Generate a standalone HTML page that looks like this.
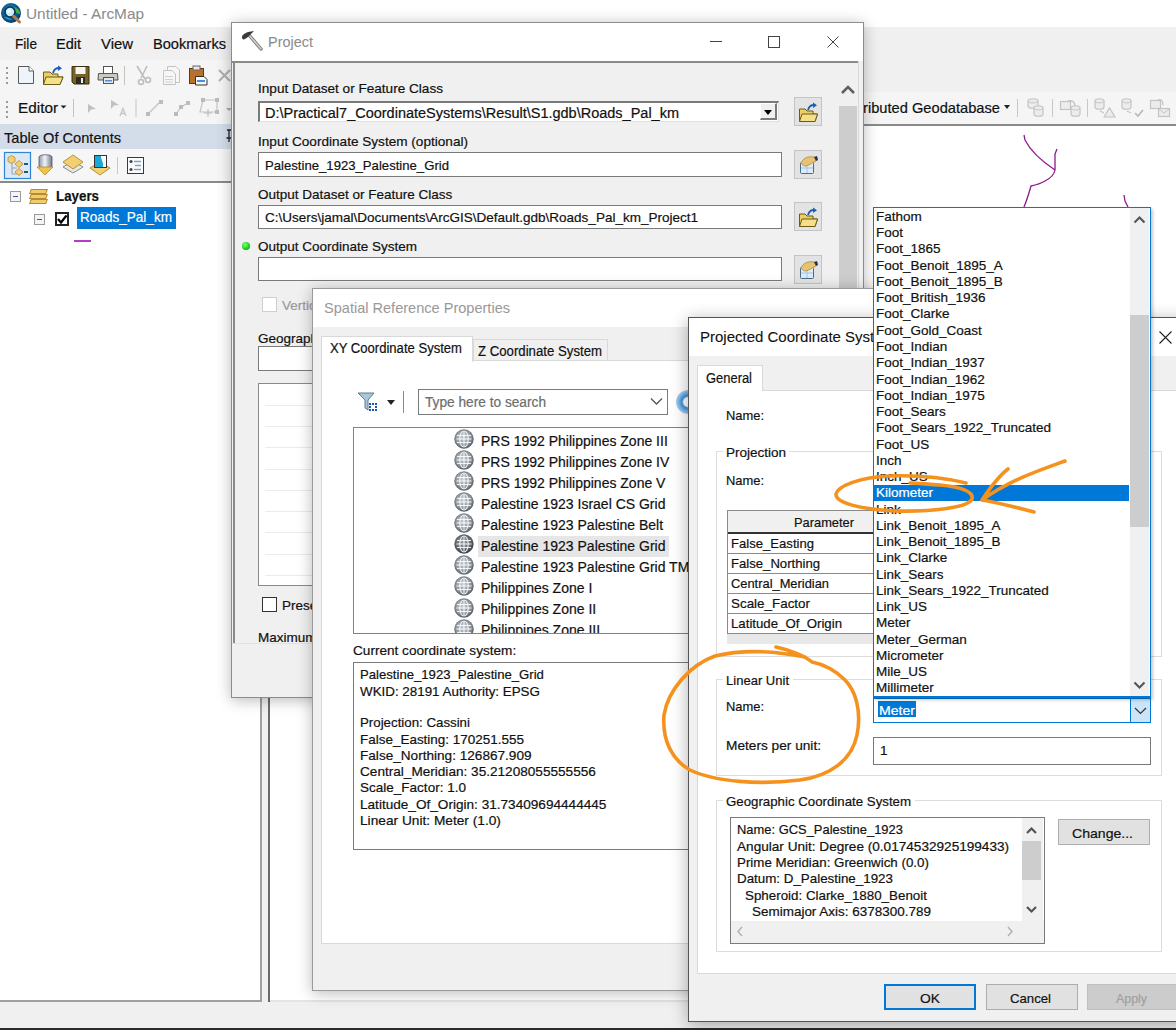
<!DOCTYPE html>
<html><head><meta charset="utf-8">
<style>
*{box-sizing:border-box;margin:0;padding:0}
html,body{width:1176px;height:1030px;overflow:hidden;background:#f0f0f0;font-family:"Liberation Sans",sans-serif;color:#000;position:relative}
.a{position:absolute}
.t{position:absolute;white-space:pre;line-height:1;transform-origin:0 0;-webkit-text-stroke:0.2px currentColor}
svg{position:absolute;overflow:visible}
</style></head><body>
<div class="a" style="left:0px;top:0px;width:1176px;height:27px;background:#fff;"></div>
<svg style="left:0;top:2px" width="24" height="24"><defs><radialGradient id="ag" cx="45%" cy="40%" r="60%"><stop offset="0" stop-color="#2a9ad0"/><stop offset=".6" stop-color="#0d5e96"/><stop offset="1" stop-color="#083a66"/></radialGradient></defs><circle cx="11" cy="11" r="10" fill="url(#ag)"/><path d="M14,5 C17,6 20,8 20,12 C18,12 16,11 15,9 Z" fill="#3fae4a"/><path d="M4,15 C6,17 9,18 12,18 C10,16 7,15 4,15 Z" fill="#2aa0d8"/><circle cx="10" cy="10" r="5" fill="#c8eef8" stroke="#0a3050" stroke-width="1.6"/><circle cx="9" cy="9" r="2" fill="#eafaff"/><path d="M13.5,14 L19.5,20" stroke="#b57a48" stroke-width="3" stroke-linecap="round"/></svg>
<div class="t" style="left:26px;top:6.25px;font-size:15px;color:#8c8c8c;-webkit-text-stroke:0.05px currentColor;transform:scaleX(1.0257);">Untitled - ArcMap</div>
<div class="a" style="left:0px;top:27px;width:1176px;height:33px;background:#f0f0f0;"></div>
<div class="t" style="left:15px;top:36.25px;font-size:15px;color:#111;transform:scaleX(0.9102);">File</div>
<div class="t" style="left:56px;top:36.25px;font-size:15px;color:#111;transform:scaleX(0.9672);">Edit</div>
<div class="t" style="left:101px;top:36.25px;font-size:15px;color:#111;transform:scaleX(0.9925);">View</div>
<div class="t" style="left:153px;top:36.25px;font-size:15px;color:#111;transform:scaleX(0.9730);">Bookmarks</div>
<div class="a" style="left:0px;top:60px;width:240px;height:32px;background:#f5f5f5;"></div>
<div class="a" style="left:0px;top:92px;width:1176px;height:32px;background:#f5f5f5;"></div>
<div class="a" style="left:0px;top:124px;width:1176px;height:2px;background:#8a8a8a;"></div>
<div class="a" style="left:6px;top:67px;width:2px;height:2px;background:#9a9a9a;"></div>
<div class="a" style="left:6px;top:72px;width:2px;height:2px;background:#9a9a9a;"></div>
<div class="a" style="left:6px;top:77px;width:2px;height:2px;background:#9a9a9a;"></div>
<div class="a" style="left:6px;top:82px;width:2px;height:2px;background:#9a9a9a;"></div>
<div class="a" style="left:6px;top:101px;width:2px;height:2px;background:#9a9a9a;"></div>
<div class="a" style="left:6px;top:106px;width:2px;height:2px;background:#9a9a9a;"></div>
<div class="a" style="left:6px;top:111px;width:2px;height:2px;background:#9a9a9a;"></div>
<div class="a" style="left:6px;top:116px;width:2px;height:2px;background:#9a9a9a;"></div>
<svg style="left:0;top:0" width="240" height="125"><path d="M18.5,66.5 L29,66.5 L33.5,71 L33.5,83.5 L18.5,83.5 Z" fill="#eef4fa" stroke="#5a5a5a" stroke-width="1"/><path d="M29,66.5 L29,71 L33.5,71" fill="#fff" stroke="#5a5a5a" stroke-width="1"/><path d="M43.5,72 L50,72 L52,74 L58,74 L58,77 L63,77 L60,84.5 L43.5,84.5 Z" fill="#e9cf66" stroke="#6e5a14" stroke-width="1"/><path d="M46,77 L63,77 L60,84.5 L43.5,84.5 Z" fill="#f4e08a" stroke="#6e5a14" stroke-width="1"/><path d="M53,73 C54,69 57,68 59,68" fill="none" stroke="#1b5fb8" stroke-width="1.8"/><path d="M58,65.5 L62,68.2 L58,71 Z" fill="#1b5fb8"/><path d="M72,66.5 L89,66.5 L89,84 L74,84 L72,82 Z" fill="#75632a" stroke="#3a300e" stroke-width="1"/><rect x="75.5" y="67" width="10" height="7" fill="#f4f4f0"/><rect x="76" y="77" width="9" height="7" fill="#2e2a22"/><rect x="81" y="78" width="2" height="5" fill="#f0f0f0"/><rect x="103.5" y="66.5" width="9" height="7" fill="#fff" stroke="#555" stroke-width="1"/><path d="M98.5,73.5 L117.5,73.5 L118,80 L98,80 Z" fill="#c9c9bf" stroke="#555" stroke-width="1"/><rect x="103.5" y="77.5" width="10" height="6" fill="#dfeaf4" stroke="#555" stroke-width="1"/><rect x="105" y="80" width="7" height="1.5" fill="#5a8fc8"/><rect x="124" y="66" width="1" height="19" fill="#c4c4c4"/><g fill="none" stroke="#bdbdbd" stroke-width="1.6"><path d="M137,66 L145,79 M147,66 L141,78"/><circle cx="141" cy="82" r="2.5"/><circle cx="148" cy="80" r="2.5"/></g><g fill="#f6f6f6" stroke="#c4c4c4" stroke-width="1"><path d="M167.5,66.5 L176,66.5 L179.5,70 L179.5,82.5 L167.5,82.5 Z"/><path d="M163.5,70.5 L172,70.5 L175.5,74 L175.5,84.5 L163.5,84.5 Z"/></g><g stroke="#d0d0d0" stroke-width="1"><path d="M165,76.5 H173 M165,79.5 H173 M165,82 H173"/></g><rect x="189.5" y="68.5" width="14" height="15" fill="#b8702a" stroke="#5a3a10" stroke-width="1"/><rect x="193" y="66" width="7" height="4" fill="#e8e8e8" stroke="#666" stroke-width="1"/><path d="M195.5,76.5 L204,76.5 L207,79.5 L207,85 L195.5,85 Z" fill="#f4f8fc" stroke="#333" stroke-width="1"/><rect x="197" y="80" width="8" height="2" fill="#4a90d9"/><path d="M219,70 L230,81 M230,70 L219,81" stroke="#b0b0b0" stroke-width="2.2"/><path d="M60.5,105.5 L66.5,105.5 L63.5,108.5 Z" fill="#222"/><rect x="73" y="99" width="1" height="18" fill="#c4c4c4"/><path d="M88,104 L96,109 L91,109.5 L88,113 Z" fill="#c0c0c0"/><path d="M111,100 L119,105 L114,105.5 L111,109 Z" fill="#c0c0c0"/><path d="M120,116 L123,108.5 L126,116 M121,113.5 H125" fill="none" stroke="#c8c8c8" stroke-width="1.4"/><rect x="135.5" y="99" width="1" height="18" fill="#c4c4c4"/><path d="M148,114 L160.5,101.5" stroke="#c4c4c4" stroke-width="1.2"/><rect x="146" y="112" width="4" height="4" fill="#bcbcbc"/><rect x="159" y="100" width="4" height="4" fill="#bcbcbc"/><path d="M176,114 L181,107 L188,103" fill="none" stroke="#c4c4c4" stroke-width="1.2"/><rect x="174" y="112" width="4" height="4" fill="#bcbcbc"/><rect x="179" y="105" width="4" height="4" fill="#bcbcbc"/><rect x="186" y="101" width="4" height="4" fill="#bcbcbc"/><path d="M203,100 L217,100 L217,112 L200,112 Z" fill="none" stroke="#c4c4c4" stroke-width="1.2"/><rect x="201" y="98" width="4" height="4" fill="#bcbcbc"/><rect x="215" y="98" width="4" height="4" fill="#bcbcbc"/><rect x="215" y="110" width="4" height="4" fill="#bcbcbc"/><path d="M208,109 V117 M204,113 H212" stroke="#b8b8b8" stroke-width="1"/><path d="M226,108 L232,108 L229,111 Z" fill="#aaa"/></svg>
<div class="t" style="left:18px;top:100.25px;font-size:15px;color:#111;transform:scaleX(1.0208);">Editor</div>
<div class="t" style="left:863px;top:100.25px;font-size:15px;color:#111;transform:scaleX(0.9778);">ributed Geodatabase</div>
<div class="a" style="left:1004px;top:105px;width:0;height:0;border-left:3px solid transparent;border-right:3px solid transparent;border-top:4px solid #222"></div>
<div class="a" style="left:1017px;top:99px;width:1px;height:18px;background:#c8c8c8;"></div>
<div class="a" style="left:1052px;top:99px;width:1px;height:18px;background:#c8c8c8;"></div>
<div class="a" style="left:1087px;top:99px;width:1px;height:18px;background:#c8c8c8;"></div>
<svg style="left:0;top:0" width="1176" height="125"><path d="M1028,101 C1028,98 1038,98 1038,101 L1038,106 C1038,109 1028,109 1028,106 Z" fill="#ececec" stroke="#c4c4c4" stroke-width="1.2"/><path d="M1028,101 C1028,103.5 1038,103.5 1038,101" fill="none" stroke="#c4c4c4" stroke-width="1"/><path d="M1034,108 C1034,105 1043,105 1043,108 L1043,114 C1043,117 1034,117 1034,114 Z" fill="#ececec" stroke="#c4c4c4" stroke-width="1.2"/><path d="M1034,108 C1034,110.5 1043,110.5 1043,108" fill="none" stroke="#c4c4c4" stroke-width="1"/><rect x="1060.5" y="101.5" width="10" height="8" fill="#ececec" stroke="#c4c4c4" stroke-width="1.2"/><path d="M1068,101 C1072,100 1075,102 1075,106" fill="none" stroke="#c4c4c4" stroke-width="1.4"/><path d="M1071,108 C1071,105 1080,105 1080,108 L1080,114 C1080,117 1071,117 1071,114 Z" fill="#ececec" stroke="#c4c4c4" stroke-width="1.2"/><path d="M1071,108 C1071,110.5 1080,110.5 1080,108" fill="none" stroke="#c4c4c4" stroke-width="1"/><path d="M1095,101 C1095,98 1104,98 1104,101 L1104,107 C1104,110 1095,110 1095,107 Z" fill="#ececec" stroke="#c4c4c4" stroke-width="1.2"/><path d="M1095,101 C1095,103.5 1104,103.5 1104,101" fill="none" stroke="#c4c4c4" stroke-width="1"/><path d="M1104,117 L1109.5,108 L1115,117 Z" fill="#ececec" stroke="#c4c4c4" stroke-width="1.2"/><path d="M1100,111 L1104,113" stroke="#c4c4c4" stroke-width="1.2"/><path d="M1122,101 C1122,98 1131,98 1131,101 L1131,107 C1131,110 1122,110 1122,107 Z" fill="#ececec" stroke="#c4c4c4" stroke-width="1.2"/><path d="M1122,101 C1122,103.5 1131,103.5 1131,101" fill="none" stroke="#c4c4c4" stroke-width="1"/><path d="M1135,113 L1138,116 L1143,110" fill="none" stroke="#b8b8b8" stroke-width="1.6"/><path d="M1127,111 L1131,113" stroke="#c4c4c4" stroke-width="1.2"/><rect x="1150.5" y="100.5" width="10" height="8" fill="#ececec" stroke="#c4c4c4" stroke-width="1.2"/><path d="M1158,100 C1161,99 1163,101 1163,105" fill="none" stroke="#c4c4c4" stroke-width="1.4"/><rect x="1158.5" y="108.5" width="11" height="8" fill="#ececec" stroke="#c4c4c4" stroke-width="1.2"/><path d="M1159,109 L1164,113 L1169,109" fill="none" stroke="#c4c4c4" stroke-width="1"/></svg>
<div class="a" style="left:0px;top:124px;width:262px;height:25px;background:#d3dde9;"></div>
<div class="t" style="left:4px;top:129.75px;font-size:15px;color:#111;transform:scaleX(0.9745);">Table Of Contents</div>
<svg style="left:225px;top:128px" width="8" height="16"><path d="M2,2 H6 M4,2 V10 M1.5,10 H6.5 M4,10 V14" fill="none" stroke="#222" stroke-width="1.3"/></svg>
<div class="a" style="left:0px;top:149px;width:262px;height:32px;background:#f6f6f6;"></div>
<div class="a" style="left:0px;top:181px;width:262px;height:2px;background:#8a8a8a;"></div>
<svg style="left:0;top:145px" width="160" height="40"><rect x="4.5" y="7.5" width="26" height="26" fill="#dce8f5" stroke="#2f86d6" stroke-width="1.2"/><path d="M12,18 V29 H17 M12,23 H17" fill="none" stroke="#a0a0a0" stroke-width="1"/><path d="M11.5,10.5 L15,12.5 L15,16.5 L11.5,18.5 L8,16.5 L8,12.5 Z" fill="#f2cf78" stroke="#c49a3a" stroke-width="1"/><path d="M19,15.5 L23,19 L19,22.5 L15,19 Z" fill="#f2cf78" stroke="#c49a3a" stroke-width="1"/><path d="M19,23.5 L23,27 L19,30.5 L15,27 Z" fill="#f2cf78" stroke="#c49a3a" stroke-width="1"/><rect x="24" y="18" width="4" height="2" fill="#1a5a80"/><rect x="24" y="26" width="4" height="2" fill="#1a5a80"/><defs><linearGradient id="cyl" x1="0" x2="1"><stop offset="0" stop-color="#8a98a8"/><stop offset=".45" stop-color="#f2f5f8"/><stop offset="1" stop-color="#6c7a88"/></linearGradient></defs><path d="M39,12 C39,9 52,9 52,12 L52,21 C52,24 39,24 39,21 Z" fill="url(#cyl)" stroke="#556" stroke-width=".8"/><path d="M37,22 L53,22 L45,30 Z" fill="#f0c24e" stroke="#b88a20" stroke-width=".8"/><path d="M63,22 L73,16 L83,22 L73,28 Z" fill="#e8e8e8" stroke="#8a8a8a" stroke-width="1"/><path d="M63,17 L73,10 L83,17 L73,24 Z" fill="#f2cf70" stroke="#b8903a" stroke-width="1"/><path d="M90,23 L100,17 L110,23 L100,30 Z" fill="#f2cf70" stroke="#b8903a" stroke-width="1"/><rect x="94.5" y="10.5" width="12" height="12" fill="#1aa8d8" stroke="#333" stroke-width="1"/><path d="M101,11 L106,11 L106,22 L103,22 C104,18 101,15 101,11 Z" fill="#fff"/><rect x="117" y="12" width="1" height="17" fill="#c8c8c8"/><rect x="127.5" y="12.5" width="16" height="16" fill="#fafcff" stroke="#2a3a58" stroke-width="1"/><circle cx="131" cy="16.5" r="1.6" fill="#444"/><circle cx="131" cy="24.5" r="1.6" fill="#444"/><path d="M134,16.5 H141 M135,20.5 H141 M134,24.5 H141" stroke="#8aa0b4" stroke-width="1.4"/></svg>
<div class="a" style="left:0px;top:183px;width:260px;height:817px;background:#fff;"></div>
<div class="a" style="left:260px;top:183px;width:2px;height:819px;background:#a0a0a0;"></div>
<div class="a" style="left:0px;top:1000px;width:262px;height:2px;background:#a0a0a0;"></div>
<div class="a" style="left:10px;top:191px;width:11px;height:11px;background:#f4f4f4;border:1px solid #9a9a9a;"></div>
<div class="a" style="left:13px;top:196px;width:5px;height:1px;background:#3a5aa8;"></div>
<div class="a" style="left:30px;top:199px;width:17px;height:5px;background:#f0cc70;border:1px solid #b88a30;transform:skewX(-20deg)"></div>
<div class="a" style="left:30px;top:194px;width:17px;height:5px;background:#f0cc70;border:1px solid #b88a30;transform:skewX(-20deg)"></div>
<div class="a" style="left:30px;top:189px;width:17px;height:5px;background:#f0cc70;border:1px solid #b88a30;transform:skewX(-20deg)"></div>
<div class="t" style="left:56px;top:188.25px;font-size:15px;color:#111;font-weight:bold;transform:scaleX(0.8890);">Layers</div>
<div class="a" style="left:34px;top:214px;width:11px;height:11px;background:#f4f4f4;border:1px solid #9a9a9a;"></div>
<div class="a" style="left:37px;top:219px;width:5px;height:1px;background:#3a5aa8;"></div>
<div class="a" style="left:55px;top:212px;width:14px;height:14px;background:#fff;border:2px solid #222;"></div>
<svg style="left:55px;top:212px" width="14" height="14"><path d="M3,7 L6,10.5 L11.5,3.5" fill="none" stroke="#000" stroke-width="2.2"/></svg>
<div class="a" style="left:77px;top:207px;width:99px;height:22px;background:#0078d7;"></div>
<div class="t" style="left:80px;top:209.25px;font-size:15px;color:#fff;transform:scaleX(0.9044);">Roads_Pal_km</div>
<div class="a" style="left:74px;top:240px;width:17px;height:2px;background:#b040c0;"></div>
<div class="a" style="left:270px;top:126px;width:906px;height:874px;background:#fff;"></div>
<div class="a" style="left:268px;top:126px;width:2px;height:876px;background:#6a6a6a;"></div>
<div class="a" style="left:270px;top:1000px;width:906px;height:2px;background:#e4e4e4;"></div>
<div class="a" style="left:0px;top:1028px;width:1176px;height:2px;background:#2b2b2b;"></div>
<svg style="left:0;top:0" width="1176" height="1030"><g fill="none" stroke="#8e1a8e" stroke-width="1.3" stroke-linejoin="round"><path d="M1024,135 L1025,140 C1030,150 1040,160 1055,170 M1057,149 L1055,154 L1055,170 C1054,176 1049,179 1045,181 C1040,184 1036,185 1031,186 C1029,193 1027,200 1024,207"/><path d="M1124,195 L1125,201 L1128,207"/></g></svg>
<div class="a" style="left:231px;top:22px;width:633px;height:676px;background:#f0f0f0;border:1px solid #8c8c8c;box-shadow:0 2px 14px rgba(0,0,0,.28)"></div>
<div class="a" style="left:232px;top:23px;width:631px;height:38px;background:#fff;"></div>
<svg style="left:236px;top:26px" width="30" height="30"><path d="M13,9 L25,23" stroke="#777" stroke-width="3.4" stroke-linecap="round"/><path d="M13,9 L25,23" stroke="#d4d0c8" stroke-width="1.6" stroke-linecap="round"/><path d="M6,11 C6,9 9,7 12,6 L18,5 L15,8 L12,11 L9,13 C7,14 6,13 6,11 Z" fill="#3a3a3a"/></svg>
<div class="t" style="left:268px;top:34.25px;font-size:15px;color:#8c8c8c;-webkit-text-stroke:0.05px currentColor;transform:scaleX(0.9639);">Project</div>
<div class="a" style="left:710px;top:41px;width:12px;height:1px;background:#444;"></div>
<div class="a" style="left:768px;top:36px;width:12px;height:12px;border:1px solid #444;"></div>
<svg style="left:827px;top:36px" width="12" height="12"><path d="M0.5,0.5 L11.5,11.5 M11.5,0.5 L0.5,11.5" stroke="#444" stroke-width="1"/></svg>
<div class="a" style="left:232px;top:61px;width:627px;height:2px;background:#8a8a8a;"></div>
<div class="a" style="left:858px;top:61px;width:1px;height:582px;background:#d8d8d8;"></div>
<div class="a" style="left:233px;top:61px;width:2px;height:582px;background:#8a8a8a;"></div>
<div class="t" style="left:258px;top:81.53px;font-size:13.5px;color:#111;transform:scaleX(1.0063);">Input Dataset or Feature Class</div>
<div class="t" style="left:258px;top:134.53px;font-size:13.5px;color:#111;transform:scaleX(1.0066);">Input Coordinate System (optional)</div>
<div class="t" style="left:258px;top:187.53px;font-size:13.5px;color:#111;">Output Dataset or Feature Class</div>
<div class="t" style="left:258px;top:239.53px;font-size:13.5px;color:#111;">Output Coordinate System</div>
<div class="a" style="left:242px;top:242px;width:8px;height:8px;border-radius:50%;background:radial-gradient(circle at 40% 35%,#8f8,#1c1 60%,#080)"></div>
<div class="a" style="left:258px;top:101px;width:521px;height:21px;background:#fff;border-top:2px solid #7a7a7a;border-left:2px solid #7a7a7a;border-right:1px solid #e0e0e0;border-bottom:1px solid #e0e0e0"></div>
<div class="a" style="left:760px;top:103px;width:17px;height:17px;background:#f0f0f0;border-right:2px solid #7a7a7a;border-bottom:2px solid #7a7a7a;border-top:1px solid #fff;border-left:1px solid #fff"></div>
<div class="a" style="left:764px;top:110px;width:0;height:0;border-left:4.5px solid transparent;border-right:4.5px solid transparent;border-top:5px solid #000"></div>
<div class="t" style="left:265px;top:106.10px;font-size:14px;color:#111;transform:scaleX(1.0350);">D:\Practical7_CoordinateSystems\Result\S1.gdb\Roads_Pal_km</div>
<div class="a" style="left:258px;top:152px;width:524px;height:25px;background:#fff;border:1px solid #7a7a7a;"></div>
<div class="t" style="left:265px;top:158.53px;font-size:13.5px;color:#111;transform:scaleX(0.9728);">Palestine_1923_Palestine_Grid</div>
<div class="a" style="left:258px;top:205px;width:524px;height:24px;background:#fff;border:1px solid #7a7a7a;"></div>
<div class="t" style="left:265px;top:210.53px;font-size:13.5px;color:#111;">C:\Users\jamal\Documents\ArcGIS\Default.gdb\Roads_Pal_km_Project1</div>
<div class="a" style="left:258px;top:257px;width:524px;height:24px;background:#fff;border:1px solid #7a7a7a;"></div>
<div class="a" style="left:794px;top:97px;width:28px;height:29px;background:#e3e3e3;border:1px solid #c4c4c4;"></div>
<svg style="left:794px;top:97px" width="28" height="29"><path d="M5.5,12 L11,12 L13,14 L19,14 L19,17 L23.5,17 L21,24.5 L5.5,24.5 Z" fill="#e9cf66" stroke="#6e5a14" stroke-width="1"/><path d="M8,17 L23.5,17 L21,24.5 L5.5,24.5 Z" fill="#f4e08a" stroke="#6e5a14" stroke-width="1"/><path d="M14,13 C15,9 18,8 20,8" fill="none" stroke="#1b5fb8" stroke-width="1.8"/><path d="M19,5.5 L23,8.2 L19,11 Z" fill="#1b5fb8"/></svg>
<div class="a" style="left:794px;top:150px;width:28px;height:29px;background:#e3e3e3;border:1px solid #c4c4c4;"></div>
<svg style="left:794px;top:150px" width="28" height="29"><rect x="6.5" y="12.5" width="13" height="11" rx="1" fill="#dcecf8" stroke="#4a6a8a" stroke-width="1"/><path d="M7,18 H19 M13,13 V23" stroke="#a8c4dc" stroke-width="1"/><path d="M7,13 C9,8 14,6 20,7 L23,8 L22,11 C19,12 16,15 12,16 C10,16 8,15 7,13 Z" fill="#e8c274" stroke="#b08a3a" stroke-width=".8"/><path d="M20,7 L23,6 L24,10 L22,11 Z" fill="#1f3550"/></svg>
<div class="a" style="left:794px;top:202px;width:28px;height:29px;background:#e3e3e3;border:1px solid #c4c4c4;"></div>
<svg style="left:794px;top:202px" width="28" height="29"><path d="M5.5,12 L11,12 L13,14 L19,14 L19,17 L23.5,17 L21,24.5 L5.5,24.5 Z" fill="#e9cf66" stroke="#6e5a14" stroke-width="1"/><path d="M8,17 L23.5,17 L21,24.5 L5.5,24.5 Z" fill="#f4e08a" stroke="#6e5a14" stroke-width="1"/><path d="M14,13 C15,9 18,8 20,8" fill="none" stroke="#1b5fb8" stroke-width="1.8"/><path d="M19,5.5 L23,8.2 L19,11 Z" fill="#1b5fb8"/></svg>
<div class="a" style="left:794px;top:255px;width:28px;height:29px;background:#e3e3e3;border:1px solid #c4c4c4;"></div>
<svg style="left:794px;top:255px" width="28" height="29"><rect x="6.5" y="12.5" width="13" height="11" rx="1" fill="#dcecf8" stroke="#4a6a8a" stroke-width="1"/><path d="M7,18 H19 M13,13 V23" stroke="#a8c4dc" stroke-width="1"/><path d="M7,13 C9,8 14,6 20,7 L23,8 L22,11 C19,12 16,15 12,16 C10,16 8,15 7,13 Z" fill="#e8c274" stroke="#b08a3a" stroke-width=".8"/><path d="M20,7 L23,6 L24,10 L22,11 Z" fill="#1f3550"/></svg>
<div class="a" style="left:838px;top:63px;width:20px;height:580px;background:#f0f0f0;"></div>
<svg style="left:840px;top:83px" width="16" height="12"><path d="M2,10 L8,4 L14,10" fill="none" stroke="#606060" stroke-width="2.6"/></svg>
<div class="a" style="left:839px;top:106px;width:18px;height:537px;background:#cdcdcd;"></div>
<div class="a" style="left:262px;top:297px;width:15px;height:15px;background:#fff;border:1px solid #cfcfcf;"></div>
<div class="t" style="left:282px;top:298.52px;font-size:13.5px;color:#999;">Vertical</div>
<div class="t" style="left:258px;top:331.52px;font-size:13.5px;color:#111;">Geographic Transformation</div>
<div class="a" style="left:258px;top:346px;width:240px;height:25px;background:#fff;border:1px solid #7a7a7a;"></div>
<div class="a" style="left:258px;top:383px;width:500px;height:203px;background:#fff;border:1px solid #8a8a8a;"></div>
<div class="a" style="left:265px;top:405px;width:490px;height:1px;background:#ebebeb;"></div>
<div class="a" style="left:265px;top:426px;width:490px;height:1px;background:#ebebeb;"></div>
<div class="a" style="left:265px;top:447px;width:490px;height:1px;background:#ebebeb;"></div>
<div class="a" style="left:265px;top:469px;width:490px;height:1px;background:#ebebeb;"></div>
<div class="a" style="left:265px;top:490px;width:490px;height:1px;background:#ebebeb;"></div>
<div class="a" style="left:265px;top:511px;width:490px;height:1px;background:#ebebeb;"></div>
<div class="a" style="left:265px;top:532px;width:490px;height:1px;background:#ebebeb;"></div>
<div class="a" style="left:265px;top:554px;width:490px;height:1px;background:#ebebeb;"></div>
<div class="a" style="left:265px;top:575px;width:490px;height:1px;background:#ebebeb;"></div>
<div class="a" style="left:262px;top:597px;width:15px;height:15px;background:#fff;border:1px solid #333;"></div>
<div class="t" style="left:282px;top:598.52px;font-size:13.5px;color:#111;">Preserve shape</div>
<div class="t" style="left:258px;top:630.52px;font-size:13.5px;color:#111;">Maximum offset deviation</div>
<div class="a" style="left:232px;top:643px;width:631px;height:54px;background:#f0f0f0;border-top:1px solid #e2e2e2"></div>
<div class="a" style="left:312px;top:288px;width:820px;height:703px;background:#f0f0f0;border:1px solid #9a9a9a;box-shadow:0 2px 14px rgba(0,0,0,.28)"></div>
<div class="a" style="left:313px;top:289px;width:818px;height:38px;background:#fff;"></div>
<div class="t" style="left:324px;top:300.25px;font-size:15px;color:#9a9a9a;-webkit-text-stroke:0.05px currentColor;transform:scaleX(0.9699);">Spatial Reference Properties</div>
<div class="a" style="left:321px;top:360px;width:900px;height:584px;background:#fff;border:1px solid #d9d9d9;"></div>
<div class="a" style="left:473px;top:339px;width:135px;height:22px;background:#f0f0f0;border:1px solid #d9d9d9;"></div>
<div class="a" style="left:321px;top:336px;width:152px;height:26px;background:#fff;border:1px solid #d9d9d9;border-bottom:none"></div>
<div class="t" style="left:330px;top:341.10px;font-size:14px;color:#111;transform:scaleX(0.9337);">XY Coordinate System</div>
<div class="t" style="left:478px;top:344.10px;font-size:14px;color:#111;transform:scaleX(0.9430);">Z Coordinate System</div>
<svg style="left:357px;top:391px" width="22" height="22"><path d="M1,2 L17,2 L11,9 L11,19 L8,17 L8,9 Z" fill="#a9c7d6" stroke="#5a7f95" stroke-width="1"/><g fill="#1a56b8"><rect x="12" y="12" width="2" height="2"/><rect x="15" y="12" width="2" height="2"/><rect x="18" y="12" width="2" height="2"/><rect x="12" y="15" width="2" height="2"/><rect x="18" y="15" width="2" height="2"/><rect x="12" y="18" width="2" height="2"/><rect x="15" y="18" width="2" height="2"/><rect x="18" y="18" width="2" height="2"/></g></svg>
<div class="a" style="left:387px;top:400px;width:0;height:0;border-left:4.5px solid transparent;border-right:4.5px solid transparent;border-top:5px solid #222"></div>
<div class="a" style="left:403px;top:391px;width:1px;height:22px;background:#8a8a8a;"></div>
<div class="a" style="left:418px;top:389px;width:250px;height:26px;background:#fff;border:1px solid #7a7a7a;"></div>
<div class="t" style="left:425px;top:395.10px;font-size:14px;color:#6d6d6d;transform:scaleX(0.9779);">Type here to search</div>
<svg style="left:650px;top:397px" width="13" height="9"><path d="M1,1.5 L6.5,7 L12,1.5" fill="none" stroke="#555" stroke-width="1.3"/></svg>
<div class="a" style="left:676px;top:390px;width:24px;height:24px;border-radius:50%;background:radial-gradient(circle,#fff 0,#fff 25%,#3a8fd8 35%,#8cc0ea 60%,#c9def0 80%)"></div>
<div class="a" style="left:353px;top:427px;width:500px;height:207px;background:#fff;border:1px solid #828282;"></div>
<div class="a" style="left:478px;top:536px;width:191px;height:21px;background:#e6e6e6;"></div>
<div class="a" style="left:354px;top:428px;width:400px;height:205px;overflow:hidden">
<svg style="left:100px;top:0.9px" width="20" height="20"><defs><radialGradient id="g0" cx="45%" cy="40%" r="60%"><stop offset="0" stop-color="#c4cad0"/><stop offset=".7" stop-color="#8c949c"/><stop offset="1" stop-color="#5e666e"/></radialGradient></defs><circle cx="10" cy="10" r="9.5" fill="url(#g0)"/><g fill="none" stroke="#fff" stroke-opacity=".85" stroke-width="1.1"><ellipse cx="10" cy="10" rx="4.2" ry="8"/><line x1="10" y1="2.5" x2="10" y2="17.5"/><line x1="3" y1="6.5" x2="17" y2="6.5"/><line x1="2.5" y1="10" x2="17.5" y2="10"/><line x1="3" y1="13.5" x2="17" y2="13.5"/></g><circle cx="10" cy="10" r="9.3" fill="none" stroke="#4a5058" stroke-opacity=".6" stroke-width=".8"/></svg>
<div class="t" style="left:127px;top:5.50px;font-size:14px;color:#111;">PRS 1992 Philippines Zone III</div>
<svg style="left:100px;top:22.0px" width="20" height="20"><defs><radialGradient id="g1" cx="45%" cy="40%" r="60%"><stop offset="0" stop-color="#c4cad0"/><stop offset=".7" stop-color="#8c949c"/><stop offset="1" stop-color="#5e666e"/></radialGradient></defs><circle cx="10" cy="10" r="9.5" fill="url(#g1)"/><g fill="none" stroke="#fff" stroke-opacity=".85" stroke-width="1.1"><ellipse cx="10" cy="10" rx="4.2" ry="8"/><line x1="10" y1="2.5" x2="10" y2="17.5"/><line x1="3" y1="6.5" x2="17" y2="6.5"/><line x1="2.5" y1="10" x2="17.5" y2="10"/><line x1="3" y1="13.5" x2="17" y2="13.5"/></g><circle cx="10" cy="10" r="9.3" fill="none" stroke="#4a5058" stroke-opacity=".6" stroke-width=".8"/></svg>
<div class="t" style="left:127px;top:26.57px;font-size:14px;color:#111;">PRS 1992 Philippines Zone IV</div>
<svg style="left:100px;top:43.0px" width="20" height="20"><defs><radialGradient id="g2" cx="45%" cy="40%" r="60%"><stop offset="0" stop-color="#c4cad0"/><stop offset=".7" stop-color="#8c949c"/><stop offset="1" stop-color="#5e666e"/></radialGradient></defs><circle cx="10" cy="10" r="9.5" fill="url(#g2)"/><g fill="none" stroke="#fff" stroke-opacity=".85" stroke-width="1.1"><ellipse cx="10" cy="10" rx="4.2" ry="8"/><line x1="10" y1="2.5" x2="10" y2="17.5"/><line x1="3" y1="6.5" x2="17" y2="6.5"/><line x1="2.5" y1="10" x2="17.5" y2="10"/><line x1="3" y1="13.5" x2="17" y2="13.5"/></g><circle cx="10" cy="10" r="9.3" fill="none" stroke="#4a5058" stroke-opacity=".6" stroke-width=".8"/></svg>
<div class="t" style="left:127px;top:47.64px;font-size:14px;color:#111;">PRS 1992 Philippines Zone V</div>
<svg style="left:100px;top:64.1px" width="20" height="20"><defs><radialGradient id="g3" cx="45%" cy="40%" r="60%"><stop offset="0" stop-color="#c4cad0"/><stop offset=".7" stop-color="#8c949c"/><stop offset="1" stop-color="#5e666e"/></radialGradient></defs><circle cx="10" cy="10" r="9.5" fill="url(#g3)"/><g fill="none" stroke="#fff" stroke-opacity=".85" stroke-width="1.1"><ellipse cx="10" cy="10" rx="4.2" ry="8"/><line x1="10" y1="2.5" x2="10" y2="17.5"/><line x1="3" y1="6.5" x2="17" y2="6.5"/><line x1="2.5" y1="10" x2="17.5" y2="10"/><line x1="3" y1="13.5" x2="17" y2="13.5"/></g><circle cx="10" cy="10" r="9.3" fill="none" stroke="#4a5058" stroke-opacity=".6" stroke-width=".8"/></svg>
<div class="t" style="left:127px;top:68.71px;font-size:14px;color:#111;">Palestine 1923 Israel CS Grid</div>
<svg style="left:100px;top:85.2px" width="20" height="20"><defs><radialGradient id="g4" cx="45%" cy="40%" r="60%"><stop offset="0" stop-color="#c4cad0"/><stop offset=".7" stop-color="#8c949c"/><stop offset="1" stop-color="#5e666e"/></radialGradient></defs><circle cx="10" cy="10" r="9.5" fill="url(#g4)"/><g fill="none" stroke="#fff" stroke-opacity=".85" stroke-width="1.1"><ellipse cx="10" cy="10" rx="4.2" ry="8"/><line x1="10" y1="2.5" x2="10" y2="17.5"/><line x1="3" y1="6.5" x2="17" y2="6.5"/><line x1="2.5" y1="10" x2="17.5" y2="10"/><line x1="3" y1="13.5" x2="17" y2="13.5"/></g><circle cx="10" cy="10" r="9.3" fill="none" stroke="#4a5058" stroke-opacity=".6" stroke-width=".8"/></svg>
<div class="t" style="left:127px;top:89.78px;font-size:14px;color:#111;">Palestine 1923 Palestine Belt</div>
<svg style="left:100px;top:106.2px" width="20" height="20"><defs><radialGradient id="g5" cx="45%" cy="40%" r="60%"><stop offset="0" stop-color="#9aa2aa"/><stop offset=".7" stop-color="#5c646c"/><stop offset="1" stop-color="#3a4048"/></radialGradient></defs><circle cx="10" cy="10" r="9.5" fill="url(#g5)"/><g fill="none" stroke="#fff" stroke-opacity=".85" stroke-width="1.1"><ellipse cx="10" cy="10" rx="4.2" ry="8"/><line x1="10" y1="2.5" x2="10" y2="17.5"/><line x1="3" y1="6.5" x2="17" y2="6.5"/><line x1="2.5" y1="10" x2="17.5" y2="10"/><line x1="3" y1="13.5" x2="17" y2="13.5"/></g><circle cx="10" cy="10" r="9.3" fill="none" stroke="#4a5058" stroke-opacity=".6" stroke-width=".8"/></svg>
<div class="t" style="left:127px;top:110.85px;font-size:14px;color:#111;">Palestine 1923 Palestine Grid</div>
<svg style="left:100px;top:127.3px" width="20" height="20"><defs><radialGradient id="g6" cx="45%" cy="40%" r="60%"><stop offset="0" stop-color="#c4cad0"/><stop offset=".7" stop-color="#8c949c"/><stop offset="1" stop-color="#5e666e"/></radialGradient></defs><circle cx="10" cy="10" r="9.5" fill="url(#g6)"/><g fill="none" stroke="#fff" stroke-opacity=".85" stroke-width="1.1"><ellipse cx="10" cy="10" rx="4.2" ry="8"/><line x1="10" y1="2.5" x2="10" y2="17.5"/><line x1="3" y1="6.5" x2="17" y2="6.5"/><line x1="2.5" y1="10" x2="17.5" y2="10"/><line x1="3" y1="13.5" x2="17" y2="13.5"/></g><circle cx="10" cy="10" r="9.3" fill="none" stroke="#4a5058" stroke-opacity=".6" stroke-width=".8"/></svg>
<div class="t" style="left:127px;top:131.92px;font-size:14px;color:#111;">Palestine 1923 Palestine Grid TM</div>
<svg style="left:100px;top:148.4px" width="20" height="20"><defs><radialGradient id="g7" cx="45%" cy="40%" r="60%"><stop offset="0" stop-color="#c4cad0"/><stop offset=".7" stop-color="#8c949c"/><stop offset="1" stop-color="#5e666e"/></radialGradient></defs><circle cx="10" cy="10" r="9.5" fill="url(#g7)"/><g fill="none" stroke="#fff" stroke-opacity=".85" stroke-width="1.1"><ellipse cx="10" cy="10" rx="4.2" ry="8"/><line x1="10" y1="2.5" x2="10" y2="17.5"/><line x1="3" y1="6.5" x2="17" y2="6.5"/><line x1="2.5" y1="10" x2="17.5" y2="10"/><line x1="3" y1="13.5" x2="17" y2="13.5"/></g><circle cx="10" cy="10" r="9.3" fill="none" stroke="#4a5058" stroke-opacity=".6" stroke-width=".8"/></svg>
<div class="t" style="left:127px;top:152.99px;font-size:14px;color:#111;">Philippines Zone I</div>
<svg style="left:100px;top:169.5px" width="20" height="20"><defs><radialGradient id="g8" cx="45%" cy="40%" r="60%"><stop offset="0" stop-color="#c4cad0"/><stop offset=".7" stop-color="#8c949c"/><stop offset="1" stop-color="#5e666e"/></radialGradient></defs><circle cx="10" cy="10" r="9.5" fill="url(#g8)"/><g fill="none" stroke="#fff" stroke-opacity=".85" stroke-width="1.1"><ellipse cx="10" cy="10" rx="4.2" ry="8"/><line x1="10" y1="2.5" x2="10" y2="17.5"/><line x1="3" y1="6.5" x2="17" y2="6.5"/><line x1="2.5" y1="10" x2="17.5" y2="10"/><line x1="3" y1="13.5" x2="17" y2="13.5"/></g><circle cx="10" cy="10" r="9.3" fill="none" stroke="#4a5058" stroke-opacity=".6" stroke-width=".8"/></svg>
<div class="t" style="left:127px;top:174.06px;font-size:14px;color:#111;">Philippines Zone II</div>
<svg style="left:100px;top:190.5px" width="20" height="20"><defs><radialGradient id="g9" cx="45%" cy="40%" r="60%"><stop offset="0" stop-color="#c4cad0"/><stop offset=".7" stop-color="#8c949c"/><stop offset="1" stop-color="#5e666e"/></radialGradient></defs><circle cx="10" cy="10" r="9.5" fill="url(#g9)"/><g fill="none" stroke="#fff" stroke-opacity=".85" stroke-width="1.1"><ellipse cx="10" cy="10" rx="4.2" ry="8"/><line x1="10" y1="2.5" x2="10" y2="17.5"/><line x1="3" y1="6.5" x2="17" y2="6.5"/><line x1="2.5" y1="10" x2="17.5" y2="10"/><line x1="3" y1="13.5" x2="17" y2="13.5"/></g><circle cx="10" cy="10" r="9.3" fill="none" stroke="#4a5058" stroke-opacity=".6" stroke-width=".8"/></svg>
<div class="t" style="left:127px;top:195.13px;font-size:14px;color:#111;">Philippines Zone III</div>
</div>
<div class="t" style="left:353px;top:644.44px;font-size:13.6px;color:#111;">Current coordinate system:</div>
<div class="a" style="left:353px;top:662px;width:500px;height:188px;background:#fff;border:1px solid #7a7a7a;"></div>
<div class="t" style="left:360px;top:668.04px;font-size:13.6px;color:#111;transform:scaleX(0.9657);">Palestine_1923_Palestine_Grid</div>
<div class="t" style="left:360px;top:684.64px;font-size:13.6px;color:#111;transform:scaleX(0.9840);">WKID: 28191 Authority: EPSG</div>
<div class="t" style="left:360px;top:716.44px;font-size:13.6px;color:#111;transform:scaleX(0.9767);">Projection: Cassini</div>
<div class="t" style="left:360px;top:732.74px;font-size:13.6px;color:#111;transform:scaleX(0.9904);">False_Easting: 170251.555</div>
<div class="t" style="left:360px;top:748.94px;font-size:13.6px;color:#111;">False_Northing: 126867.909</div>
<div class="t" style="left:360px;top:765.14px;font-size:13.6px;color:#111;">Central_Meridian: 35.21208055555556</div>
<div class="t" style="left:360px;top:781.34px;font-size:13.6px;color:#111;transform:scaleX(0.9945);">Scale_Factor: 1.0</div>
<div class="t" style="left:360px;top:797.54px;font-size:13.6px;color:#111;">Latitude_Of_Origin: 31.73409694444445</div>
<div class="t" style="left:360px;top:813.84px;font-size:13.6px;color:#111;transform:scaleX(1.0083);">Linear Unit: Meter (1.0)</div>
<div class="a" style="left:688px;top:317px;width:600px;height:705px;background:#f0f0f0;border:1px solid #555;box-shadow:0 3px 16px rgba(0,0,0,.32)"></div>
<div class="a" style="left:689px;top:318px;width:600px;height:38px;background:#fff;"></div>
<div class="t" style="left:700px;top:329.25px;font-size:15px;color:#111;-webkit-text-stroke:0.1px currentColor;">Projected Coordinate System</div>
<svg style="left:1159px;top:331px" width="13" height="13"><path d="M0.5,0.5 L12.5,12.5 M12.5,0.5 L0.5,12.5" stroke="#222" stroke-width="1.1"/></svg>
<div class="a" style="left:697px;top:390px;width:600px;height:584px;background:#fff;border:1px solid #d9d9d9;"></div>
<div class="a" style="left:697px;top:365px;width:66px;height:26px;background:#fff;border:1px solid #d9d9d9;border-bottom:none"></div>
<div class="t" style="left:706px;top:371.10px;font-size:14px;color:#111;transform:scaleX(0.9235);">General</div>
<div class="t" style="left:726px;top:408.52px;font-size:13.5px;color:#111;transform:scaleX(0.9557);">Name:</div>
<div class="a" style="left:716px;top:451px;width:446px;height:206px;border:1px solid #dcdcdc;"></div>
<div class="a" style="left:723px;top:445px;width:66px;height:12px;background:#fff;"></div>
<div class="t" style="left:726px;top:445.52px;font-size:13.5px;color:#111;">Projection</div>
<div class="t" style="left:726px;top:473.52px;font-size:13.5px;color:#111;transform:scaleX(0.9557);">Name:</div>
<div class="a" style="left:727px;top:510px;width:400px;height:124px;background:#fff;border:1px solid #8a8a8a;"></div>
<div class="a" style="left:728px;top:511px;width:398px;height:21px;background:#f0f0f0;"></div>
<div class="a" style="left:728px;top:532px;width:398px;height:2px;background:#333;"></div>
<div class="a" style="left:728px;top:553px;width:398px;height:1px;background:#8a8a8a;"></div>
<div class="a" style="left:728px;top:573px;width:398px;height:1px;background:#8a8a8a;"></div>
<div class="a" style="left:728px;top:593px;width:398px;height:1px;background:#8a8a8a;"></div>
<div class="a" style="left:728px;top:613px;width:398px;height:1px;background:#8a8a8a;"></div>
<div class="t" style="left:794px;top:515.52px;font-size:13.5px;color:#111;transform:scaleX(0.9520);">Parameter</div>
<div class="t" style="left:731px;top:536.82px;font-size:13.5px;color:#111;transform:scaleX(0.9702);">False_Easting</div>
<div class="t" style="left:731px;top:556.82px;font-size:13.5px;color:#111;transform:scaleX(0.9721);">False_Northing</div>
<div class="t" style="left:731px;top:576.82px;font-size:13.5px;color:#111;transform:scaleX(0.9533);">Central_Meridian</div>
<div class="t" style="left:731px;top:596.82px;font-size:13.5px;color:#111;transform:scaleX(0.9932);">Scale_Factor</div>
<div class="t" style="left:731px;top:616.82px;font-size:13.5px;color:#111;transform:scaleX(0.9795);">Latitude_Of_Origin</div>
<div class="a" style="left:727px;top:634px;width:400px;height:10px;background:#e8e8e8;"></div>
<div class="a" style="left:716px;top:679px;width:446px;height:97px;border:1px solid #dcdcdc;"></div>
<div class="a" style="left:723px;top:673px;width:70px;height:12px;background:#fff;"></div>
<div class="t" style="left:726px;top:673.52px;font-size:13.5px;color:#111;transform:scaleX(0.9650);">Linear Unit</div>
<div class="t" style="left:726px;top:699.52px;font-size:13.5px;color:#111;transform:scaleX(0.9557);">Name:</div>
<div class="t" style="left:726px;top:738.52px;font-size:13.5px;color:#111;transform:scaleX(1.0129);">Meters per unit:</div>
<div class="a" style="left:873px;top:698px;width:278px;height:25px;background:#fff;border:1px solid #0078d7;"></div>
<div class="a" style="left:1130px;top:699px;width:20px;height:23px;background:#cce4f7;border-left:1px solid #0078d7"></div>
<svg style="left:1134px;top:707px" width="13" height="8"><path d="M1,1 L6.5,6.5 L12,1" fill="none" stroke="#333" stroke-width="1.2"/></svg>
<div class="a" style="left:878px;top:701px;width:38px;height:16px;background:#0078d7;"></div>
<div class="t" style="left:879px;top:703.52px;font-size:13.5px;color:#fff;transform:scaleX(1.0432);">Meter</div>
<div class="a" style="left:873px;top:737px;width:278px;height:28px;background:#fff;border:1px solid #7a7a7a;"></div>
<div class="t" style="left:880px;top:743.52px;font-size:13.5px;color:#111;">1</div>
<div class="a" style="left:716px;top:800px;width:446px;height:152px;border:1px solid #dcdcdc;"></div>
<div class="a" style="left:723px;top:794px;width:192px;height:12px;background:#fff;"></div>
<div class="t" style="left:726px;top:794.52px;font-size:13.5px;color:#111;transform:scaleX(0.9822);">Geographic Coordinate System</div>
<div class="a" style="left:730px;top:817px;width:315px;height:127px;background:#fff;border:1px solid #7a7a7a;"></div>
<div class="a" style="left:1022px;top:818px;width:21px;height:104px;background:#f0f0f0;"></div>
<div class="a" style="left:1022px;top:841px;width:19px;height:39px;background:#cdcdcd;"></div>
<svg style="left:1025px;top:826px" width="13" height="8"><path d="M2,7 L6.5,2.5 L11,7" fill="none" stroke="#555" stroke-width="2.2"/></svg>
<svg style="left:1025px;top:906px" width="13" height="8"><path d="M2,1 L6.5,5.5 L11,1" fill="none" stroke="#555" stroke-width="2.2"/></svg>
<div class="a" style="left:731px;top:921px;width:313px;height:22px;background:#f0f0f0;"></div>
<svg style="left:736px;top:925px" width="8" height="13"><path d="M6,2 L2,6.5 L6,11" fill="none" stroke="#b0b0b0" stroke-width="1.4"/></svg>
<svg style="left:1006px;top:925px" width="8" height="13"><path d="M2,2 L6,6.5 L2,11" fill="none" stroke="#b0b0b0" stroke-width="1.4"/></svg>
<div class="a" style="left:731px;top:818px;width:292px;height:103px;overflow:hidden">
<div class="t" style="left:6px;top:5.34px;font-size:13.6px;color:#111;transform:scaleX(0.9505);">Name: GCS_Palestine_1923</div>
<div class="t" style="left:6px;top:21.64px;font-size:13.6px;color:#111;">Angular Unit: Degree (0.0174532925199433)</div>
<div class="t" style="left:6px;top:37.94px;font-size:13.6px;color:#111;transform:scaleX(0.9808);">Prime Meridian: Greenwich (0.0)</div>
<div class="t" style="left:6px;top:54.24px;font-size:13.6px;color:#111;transform:scaleX(0.9826);">Datum: D_Palestine_1923</div>
<div class="t" style="left:14px;top:70.54px;font-size:13.6px;color:#111;transform:scaleX(0.9825);">Spheroid: Clarke_1880_Benoit</div>
<div class="t" style="left:21px;top:86.84px;font-size:13.6px;color:#111;transform:scaleX(0.9906);">Semimajor Axis: 6378300.789</div>
</div>
<div class="a" style="left:1058px;top:819px;width:92px;height:26px;background:#e1e1e1;border:1px solid #adadad;"></div>
<div class="t" style="left:1072px;top:826.52px;font-size:13.5px;color:#111;transform:scaleX(1.0420);">Change...</div>
<div class="a" style="left:884px;top:984px;width:92px;height:26px;background:#e1e1e1;border:2px solid #0078d7;"></div>
<div class="t" style="left:920px;top:992.02px;font-size:13.5px;color:#111;transform:scaleX(1.0254);">OK</div>
<div class="a" style="left:986px;top:984px;width:92px;height:26px;background:#e1e1e1;border:1px solid #adadad;"></div>
<div class="t" style="left:1010px;top:992.02px;font-size:13.5px;color:#111;transform:scaleX(0.9756);">Cancel</div>
<div class="a" style="left:1087px;top:984px;width:120px;height:26px;background:#cccccc;border:1px solid #bfbfbf;"></div>
<div class="t" style="left:1116px;top:992.02px;font-size:13.5px;color:#a0a0a0;transform:scaleX(0.9179);">Apply</div>
<div class="a" style="left:873px;top:207px;width:278px;height:491px;background:#fff;border:1px solid #0078d7;border-bottom-width:2px;box-shadow:2px 2px 3px rgba(0,0,0,.22)"></div>
<div class="a" style="left:1130px;top:208px;width:19px;height:488px;background:#f0f0f0;"></div>
<div class="a" style="left:1130px;top:315px;width:19px;height:212px;background:#cdcdcd;"></div>
<svg style="left:1133px;top:215px" width="13" height="9"><path d="M1.5,7.5 L6.5,2.5 L11.5,7.5" fill="none" stroke="#555" stroke-width="2.1"/></svg>
<svg style="left:1133px;top:681px" width="13" height="9"><path d="M1.5,1.5 L6.5,6.5 L11.5,1.5" fill="none" stroke="#555" stroke-width="2.1"/></svg>
<div class="t" style="left:876px;top:209.93px;font-size:13.5px;color:#111;">Fathom</div>
<div class="t" style="left:876px;top:226.19px;font-size:13.5px;color:#111;">Foot</div>
<div class="t" style="left:876px;top:242.45px;font-size:13.5px;color:#111;">Foot_1865</div>
<div class="t" style="left:876px;top:258.70px;font-size:13.5px;color:#111;">Foot_Benoit_1895_A</div>
<div class="t" style="left:876px;top:274.96px;font-size:13.5px;color:#111;">Foot_Benoit_1895_B</div>
<div class="t" style="left:876px;top:291.23px;font-size:13.5px;color:#111;">Foot_British_1936</div>
<div class="t" style="left:876px;top:307.49px;font-size:13.5px;color:#111;">Foot_Clarke</div>
<div class="t" style="left:876px;top:323.75px;font-size:13.5px;color:#111;">Foot_Gold_Coast</div>
<div class="t" style="left:876px;top:340.00px;font-size:13.5px;color:#111;">Foot_Indian</div>
<div class="t" style="left:876px;top:356.26px;font-size:13.5px;color:#111;">Foot_Indian_1937</div>
<div class="t" style="left:876px;top:372.52px;font-size:13.5px;color:#111;">Foot_Indian_1962</div>
<div class="t" style="left:876px;top:388.78px;font-size:13.5px;color:#111;">Foot_Indian_1975</div>
<div class="t" style="left:876px;top:405.04px;font-size:13.5px;color:#111;">Foot_Sears</div>
<div class="t" style="left:876px;top:421.31px;font-size:13.5px;color:#111;">Foot_Sears_1922_Truncated</div>
<div class="t" style="left:876px;top:437.56px;font-size:13.5px;color:#111;">Foot_US</div>
<div class="t" style="left:876px;top:453.83px;font-size:13.5px;color:#111;">Inch</div>
<div class="t" style="left:876px;top:470.09px;font-size:13.5px;color:#111;">Inch_US</div>
<div class="a" style="left:874px;top:485px;width:255px;height:16px;background:#0078d7;"></div>
<div class="t" style="left:876px;top:486.35px;font-size:13.5px;color:#fff;">Kilometer</div>
<div class="t" style="left:876px;top:502.61px;font-size:13.5px;color:#111;">Link</div>
<div class="t" style="left:876px;top:518.87px;font-size:13.5px;color:#111;">Link_Benoit_1895_A</div>
<div class="t" style="left:876px;top:535.12px;font-size:13.5px;color:#111;">Link_Benoit_1895_B</div>
<div class="t" style="left:876px;top:551.38px;font-size:13.5px;color:#111;">Link_Clarke</div>
<div class="t" style="left:876px;top:567.64px;font-size:13.5px;color:#111;">Link_Sears</div>
<div class="t" style="left:876px;top:583.90px;font-size:13.5px;color:#111;">Link_Sears_1922_Truncated</div>
<div class="t" style="left:876px;top:600.16px;font-size:13.5px;color:#111;">Link_US</div>
<div class="t" style="left:876px;top:616.43px;font-size:13.5px;color:#111;">Meter</div>
<div class="t" style="left:876px;top:632.69px;font-size:13.5px;color:#111;">Meter_German</div>
<div class="t" style="left:876px;top:648.95px;font-size:13.5px;color:#111;">Micrometer</div>
<div class="t" style="left:876px;top:665.21px;font-size:13.5px;color:#111;">Mile_US</div>
<div class="t" style="left:876px;top:681.47px;font-size:13.5px;color:#111;">Millimeter</div>
<svg style="left:0;top:0" width="1176" height="1030"><g fill="none" stroke="#f5921e" stroke-width="3.6" stroke-linecap="round" stroke-linejoin="round"><path d="M966,483 C945,478 920,475 890,476 C860,477 838,486 836,494 C835,503 860,509 895,511 C930,512 968,508 972,499 C974,492 962,487 940,485 C925,484 915,483 910,483"/><path d="M1065,461 C1040,470 1010,480 982,500 M982,500 C990,488 1000,475 1008,469 M982,500 C1000,503 1018,508 1034,512"/><path d="M776,647 C790,650 805,656 812,662 M805,657 C770,650 740,650 715,656 C690,665 668,690 664,715 C662,740 672,760 690,770 C715,782 760,785 800,780 C830,776 852,760 857,735 C862,710 855,690 845,680 C835,670 822,664 812,662"/></g></svg>
</body></html>
